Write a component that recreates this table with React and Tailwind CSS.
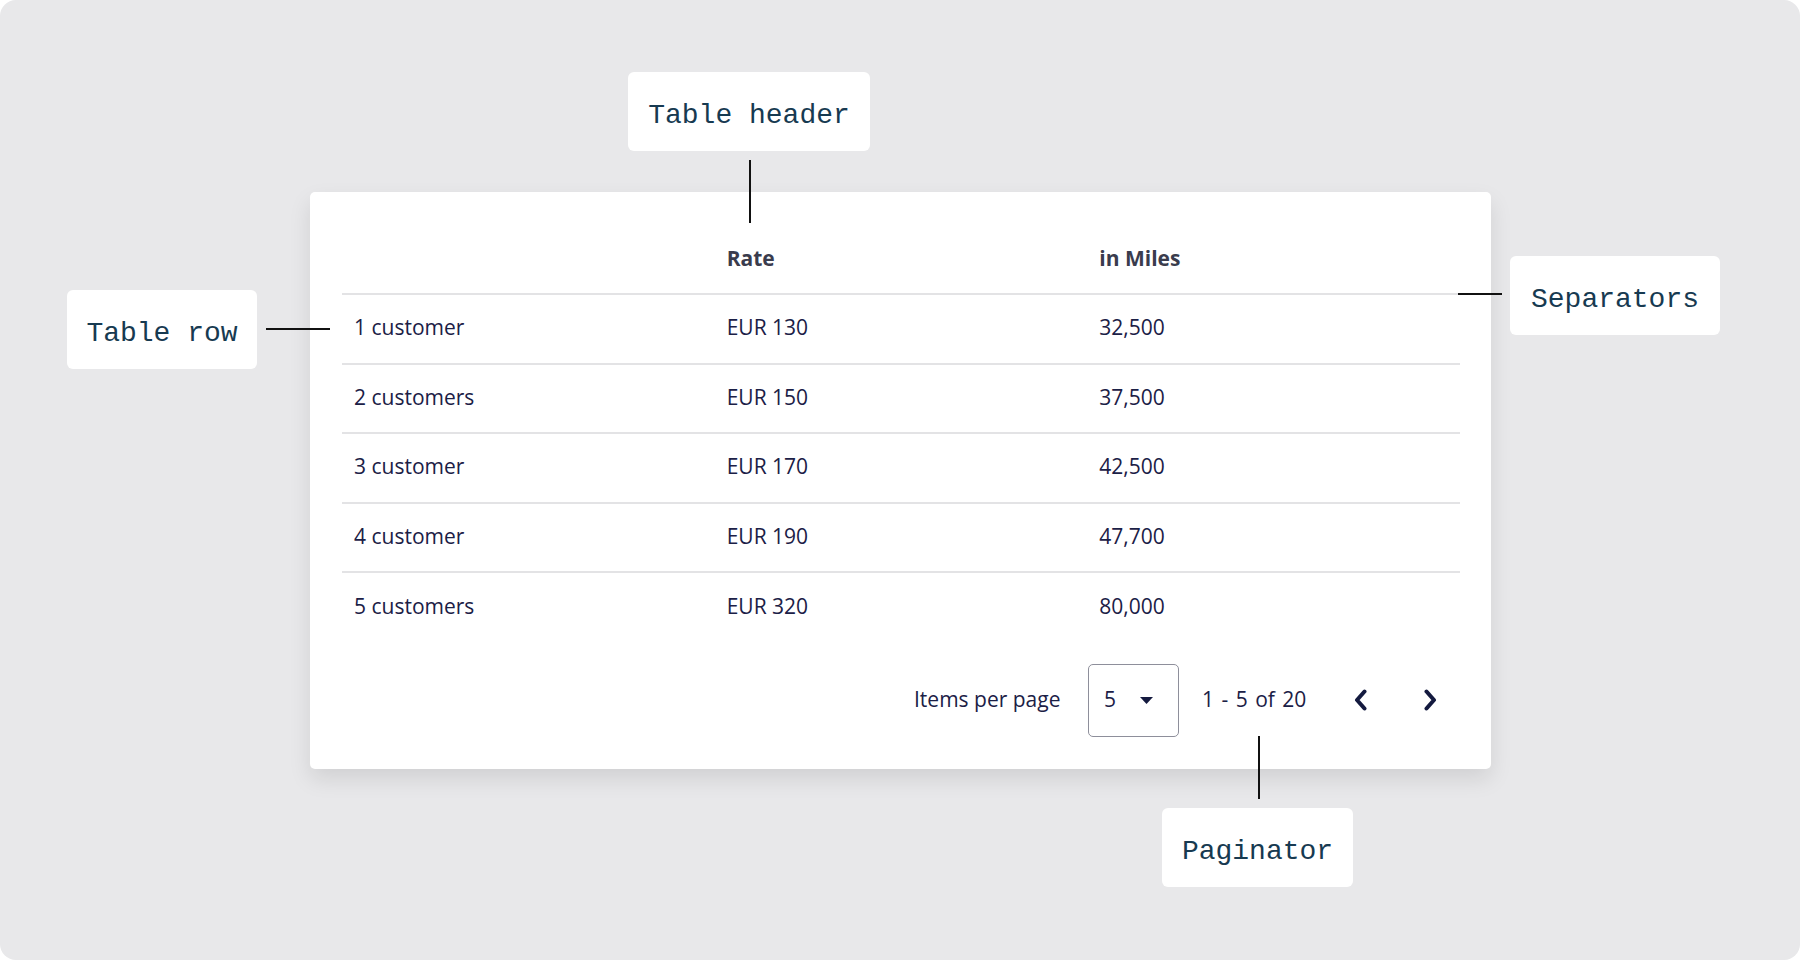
import React from "react";

const rows = [
  ["1 customer", "EUR 130", "32,500"],
  ["2 customers", "EUR 150", "37,500"],
  ["3 customer", "EUR 170", "42,500"],
  ["4 customer", "EUR 190", "47,700"],
  ["5 customers", "EUR 320", "80,000"],
];

function Label({ children, className }) {
  return (
    <div
      className={
        "absolute flex h-[79px] items-center justify-center whitespace-nowrap rounded-[6px] bg-white px-5 pt-[9px] text-[28px] leading-none text-[#173a51] " +
        className
      }
      style={{ fontFamily: '"Liberation Mono", "Courier New", monospace' }}
    >
      {children}
    </div>
  );
}

function ChevronLeft() {
  return (
    <svg width="16" height="22" viewBox="0 0 16 22" fill="none">
      <path d="M11.5 2.5 L4 11 L11.5 19.5" stroke="#141a3f" strokeWidth="4" strokeLinecap="round" strokeLinejoin="round" />
    </svg>
  );
}

function ChevronRight() {
  return (
    <svg width="16" height="22" viewBox="0 0 16 22" fill="none">
      <path d="M4.5 2.5 L12 11 L4.5 19.5" stroke="#141a3f" strokeWidth="4" strokeLinecap="round" strokeLinejoin="round" />
    </svg>
  );
}

export default function App() {
  return (
    <div className="h-[960px] w-[1800px] bg-white">
      <div
        className="relative h-[960px] w-[1800px] rounded-[16px] bg-[#e8e8ea] pl-[310px] pt-[192px]"
        style={{ fontFamily: '"Open Sans", Lato, sans-serif' }}
      >
        {/* Card */}
        <div className="flex w-[1181px] flex-col rounded-[5px] bg-white pb-[32px] pl-[32px] pr-[31px] shadow-[0_10px_22px_rgba(0,0,0,0.10)]">
          {/* Header */}
          <div className="grid h-[103px] grid-cols-3 items-end border-b-2 border-[#e3e3e5] pb-[23px] text-[21px] font-bold leading-[24px] text-[#3a3c4d]">
            <div className="pl-3"></div>
            <div className="pl-3">Rate</div>
            <div className="pl-3">in Miles</div>
          </div>
          {/* Rows */}
          {rows.map((r, i) => (
            <div
              key={i}
              className={
                "grid h-[69.5px] grid-cols-3 items-center pb-[3px] text-[21px] leading-[24px] text-[#1b2046] " +
                (i < rows.length - 1 ? "border-b-2 border-[#e3e3e5]" : "")
              }
            >
              <div className="pl-3">{r[0]}</div>
              <div className="pl-3">{r[1]}</div>
              <div className="pl-3">{r[2]}</div>
            </div>
          ))}
          {/* Paginator */}
          <div className="mt-[21px] flex items-center justify-end pr-[10px] text-[21px] leading-[24px] text-[#1b2046]">
            <span className="w-[152px] whitespace-nowrap pb-[2px]">Items per page</span>
            <div className="ml-[22px] flex h-[73px] w-[91px] items-center rounded-[5px] border border-[#8e8f9b] pb-[2px] pl-[15px]">
              <span>5</span>
              <svg className="ml-[24px] mt-[2px]" width="13" height="7" viewBox="0 0 13 7">
                <path d="M0 0 L13 0 L6.5 7 Z" fill="#141a3f" />
              </svg>
            </div>
            <span className="ml-[23px] w-[108px] whitespace-nowrap pb-[2px] [word-spacing:2px]">1 - 5 of 20</span>
            <div className="ml-[31px] flex h-[40px] w-[40px] items-center justify-center">
              <ChevronLeft />
            </div>
            <div className="ml-[29px] flex h-[40px] w-[40px] items-center justify-center">
              <ChevronRight />
            </div>
          </div>
        </div>

        {/* Annotations */}
        <Label className="left-[628px] top-[72px] w-[242px]">Table header</Label>
        <div className="absolute left-[749px] top-[160px] h-[63px] w-[2px] bg-[#111]" />

        <Label className="left-[67px] top-[290px] w-[190px]">Table row</Label>
        <div className="absolute left-[266px] top-[328px] h-[2px] w-[64px] bg-[#111]" />

        <Label className="left-[1510px] top-[256px] w-[210px]">Separators</Label>
        <div className="absolute left-[1458px] top-[293px] h-[2px] w-[44px] bg-[#111]" />

        <Label className="left-[1162px] top-[808px] w-[191px]">Paginator</Label>
        <div className="absolute left-[1258px] top-[736px] h-[63px] w-[2px] bg-[#111]" />
      </div>
    </div>
  );
}
